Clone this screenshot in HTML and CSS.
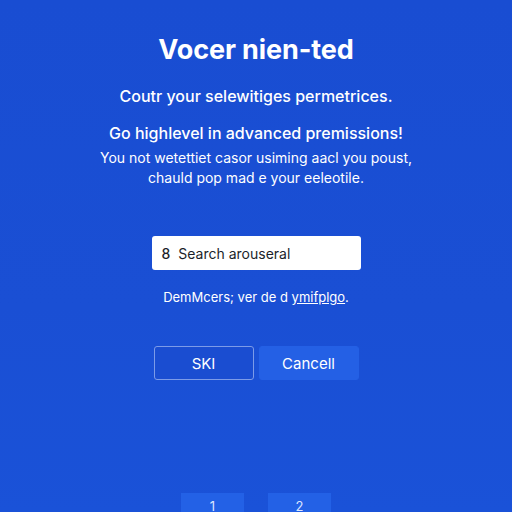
FILE: index.html
```html
<!DOCTYPE html>
<html>
<head>
<meta charset="utf-8">
<link rel="stylesheet" href="styles.css">
</head>
<body>
<main class="page">
  <h1 class="title">Vocer nien-ted</h1>
  <p class="subtitle">Coutr your selewitiges permetrices.</p>
  <p class="lead">Go highlevel in advanced premissions!</p>
  <p class="body">You not wetettiet casor usiming aacl you poust,<br>chauld pop mad e your eeleotile.</p>
  <div class="search">
    <span class="search-icon">8</span>
    <span class="search-text">Search arouseral</span>
  </div>
  <p class="note">DemMcers; ver de d <a class="link">ymifplgo</a>.</p>
  <div class="actions">
    <button class="btn btn-outline">SKI</button>
    <button class="btn btn-fill">Cancell</button>
  </div>
  <div class="pager">
    <span class="page-btn">1</span>
    <span class="page-btn">2</span>
  </div>
</main>
</body>
</html>
```
FILE: styles.css
```css
html, body {
  margin: 0;
  padding: 0;
  height: 100%;
}
body {
  background: linear-gradient(180deg, #194dd2 0%, #1a4fd4 60%, #1a52d8 100%);
  font-family: "Inter", "Open Sans", sans-serif;
  color: #fff;
  overflow: hidden;
}
.page {
  height: 512px;
  display: flex;
  flex-direction: column;
  align-items: center;
  text-align: center;
}
.title {
  margin: 34px 0 0;
  font-size: 27px;
  font-weight: 700;
  line-height: 32px;
  letter-spacing: -0.1px;
}
.subtitle {
  margin: 20px 0 0;
  font-size: 16px;
  font-weight: 500;
  line-height: 20px;
}
.lead {
  margin: 17px 0 0;
  font-size: 16px;
  font-weight: 500;
  line-height: 20px;
}
.body {
  margin: 5px 0 0;
  font-size: 14px;
  line-height: 20px;
  font-weight: 400;
}
.search {
  margin-top: 48px;
  width: 209px;
  height: 34px;
  box-sizing: border-box;
  background: #fff;
  border-radius: 3px;
  display: flex;
  align-items: center;
  padding-left: 10px;
  gap: 8px;
  color: #1b1f2a;
  font-size: 14px;
  text-align: left;
}
.search-icon {
  font-size: 14px;
  font-weight: 500;
}
.note {
  margin: 18px 0 0;
  font-size: 13px;
  line-height: 18px;
}
.link {
  color: #fff;
  text-decoration: underline;
}
.actions {
  margin-top: 40px;
  display: flex;
  gap: 5px;
}
.btn {
  width: 100px;
  height: 34px;
  font-family: inherit;
  font-size: 15px;
  color: #fff;
  border-radius: 3px;
  padding: 0;
}
.btn-outline {
  background: #1a4dd1;
  border: 1px solid #7c9be8;
}
.btn-fill {
  background: #2460e5;
  border: 1px solid #2460e5;
}
.pager {
  margin-top: auto;
  display: flex;
  gap: 24px;
  height: 19px;
}
.page-btn {
  width: 63px;
  height: 19px;
  background: #2361e6;
  font-size: 13px;
  line-height: 26px;
  color: #dbe6ff;
  overflow: hidden;
}
```
